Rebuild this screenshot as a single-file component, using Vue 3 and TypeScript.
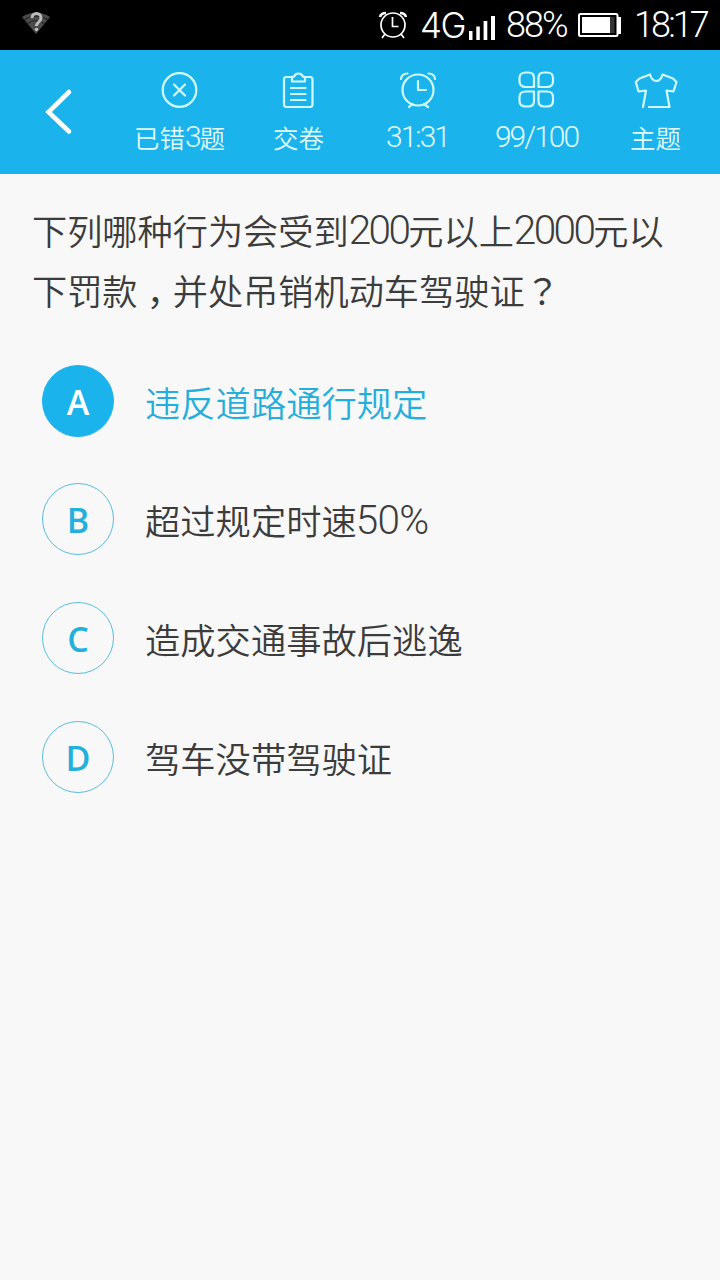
<script setup lang="ts">
interface Run { text: string; kind: string }
interface Option { key: string; text: string; selected?: boolean }
interface Tool { icon: string; label: string }

const tools: Tool[] = [
  { icon: 'wrong', label: '已错3题' },
  { icon: 'submit', label: '交卷' },
  { icon: 'timer', label: '31:31' },
  { icon: 'grid', label: '99/100' },
  { icon: 'theme', label: '主题' },
]

const question: string[] = ['下列哪种行为会受到200元以上2000元以', '下罚款，并处吊销机动车驾驶证？']

const options: Option[] = [
  { key: 'A', text: '违反道路通行规定', selected: true },
  { key: 'B', text: '超过规定时速50%' },
  { key: 'C', text: '造成交通事故后逃逸' },
  { key: 'D', text: '驾车没带驾驶证' },
]

// Splits a string so digits and punctuation can be set apart from the Chinese text.
function runs(text: string): Run[] {
  return (text.match(/[0-9%:/]+|，|？|[^0-9%:/，？]+/g) ?? []).map((t) => ({
    text: t,
    kind: /^[0-9%:/]/.test(t) ? 'latin' : t === '，' ? 'comma' : t === '？' ? 'mark' : 'han',
  }))
}
</script>

<template>
  <div class="screen">
    <div class="status">
      <svg class="wifi" width="30" height="26" viewBox="0 0 30 26">
        <path d="M1 6Q15 -3 29 6L15 23Z" fill="#4b4b4b" />
        <path d="M3 9Q15 1 27 9M6 13Q15 6 24 13" fill="none" stroke="#222" stroke-width="1.2" />
        <path d="M11 7C11 1 20 1 20 7C20 11 15.500 11 15.500 15" fill="none" stroke="#bcbcbc" stroke-width="3" />
        <circle cx="15.500" cy="18.500" r="1.800" fill="#bcbcbc" />
      </svg>
      <svg class="alarm" width="30" height="30" viewBox="0 0 30 30" fill="none" stroke="#fff" stroke-width="1.700">
        <circle cx="15" cy="15" r="12" />
        <path d="M14.500 7V16.500H20.500M7 24L4 28M23 24L26 28" />
        <path d="M2 7Q3 3 8 3M22 3Q27 3 28 7" stroke-width="2.600" />
      </svg>
      <span class="net">4G</span>
      <svg class="signal" width="28" height="26" viewBox="0 0 28 26" fill="#fff">
        <rect x="0" y="16" width="3.500" height="9" />
        <rect x="7.300" y="11.500" width="3.500" height="13.500" />
        <rect x="14.600" y="6" width="3.700" height="19" />
        <rect x="22" y="1" width="4" height="24" />
      </svg>
      <span class="percent">88%</span>
      <svg class="battery" width="44" height="26" viewBox="0 0 44 26">
        <rect x="1" y="2" width="38.500" height="22" rx="1.500" fill="none" stroke="#fff" stroke-width="2" />
        <rect x="4" y="5" width="28" height="16" fill="#fff" />
        <rect x="32" y="5" width="4.500" height="16" fill="#333" />
        <rect x="39.500" y="5" width="3.500" height="17" fill="#fff" />
      </svg>
      <span class="clock">18:17</span>
    </div>

    <div class="toolbar">
      <div class="back">
        <svg width="30" height="48" viewBox="0 0 30 48" fill="none" stroke="#fff" stroke-width="4.600" stroke-linecap="round" stroke-linejoin="miter">
          <path d="M26 4L5.500 24L26 43.500" />
        </svg>
      </div>
      <div v-for="t in tools" :key="t.icon" class="tool">
        <svg width="44" height="40" viewBox="0 0 44 40" fill="none" stroke="#d2fbff" stroke-width="2.200" stroke-linecap="round" stroke-linejoin="round">
          <template v-if="t.icon === 'wrong'">
            <circle cx="21.500" cy="20" r="16.800" />
            <path d="M16 14.500L27 25.500M27 14.500L16 25.500" />
          </template>
          <template v-else-if="t.icon === 'submit'">
            <path d="M15 7H9.500Q7 7 7 9.500V34.500Q7 37 9.500 37H33Q35.500 37 35.500 34.500V9.500Q35.500 7 33 7H27.500" />
            <path d="M15 11.500V7.500L17.500 6Q18.500 3.500 21.500 3.500Q24.500 3.500 25.500 6L28 7.500V11.500Z" />
            <path d="M14 18H28.500M14 24H28.500M14 30H28.500" />
          </template>
          <template v-else-if="t.icon === 'timer'">
            <circle cx="22" cy="20" r="15.500" />
            <path d="M22 11V20H30M16.500 34L13 37M28 34L32 37M5 9Q5.500 3.500 11.500 3.500M32.500 3.500Q38.500 3.500 39 9" />
          </template>
          <template v-else-if="t.icon === 'grid'">
            <path d="M19 17V8Q19 2.500 13.500 2.500H11Q4.500 2.500 4.500 8V11.500Q4.500 17 11 17Z" />
            <path d="M23.500 17V8Q23.500 2.500 29 2.500H32Q38 2.500 38 8V11.500Q38 17 32 17Z" />
            <path d="M19 21.500V31Q19 36.500 13.500 36.500H11Q4.500 36.500 4.500 31V27Q4.500 21.500 11 21.500Z" />
            <path d="M23.500 21.500V31Q23.500 36.500 29 36.500H32Q38 36.500 38 31V27Q38 21.500 32 21.500Z" />
          </template>
          <template v-else>
            <path d="M9 37L12 20.500L4.500 21.500L1.800 12L5.500 8.500L16 4.500Q18 11 22 11Q27 11 28.500 4.500L39 8.500L42.500 12L39.500 21.500L32.500 20.500L35.500 37H15" />
          </template>
        </svg>
        <div class="label">
          <span v-for="(r, i) in runs(t.label)" :key="i" :class="r.kind">{{ r.text }}</span>
        </div>
      </div>
    </div>

    <div class="question">
      <div v-for="line in question" :key="line" class="line">
        <span v-for="(r, i) in runs(line)" :key="i" :class="r.kind">{{ r.text }}</span>
      </div>
    </div>

    <div class="options">
      <div v-for="o in options" :key="o.key" class="option" :class="{ selected: o.selected }">
        <div class="badge"><span>{{ o.key }}</span></div>
        <div class="text">
          <span v-for="(r, i) in runs(o.text)" :key="i" :class="r.kind">{{ r.text }}</span>
        </div>
      </div>
    </div>
  </div>
</template>

<style>
body { background: #f8f8f8; }
</style>

<style scoped>
.screen {
  width: 720px;
  height: 1280px;
  overflow: hidden;
  background: #f8f8f8;
  color: #3c3c3c;
  font-family: "Noto Sans CJK SC", sans-serif;
  font-weight: 350;
  white-space: nowrap;
}
.screen span { display: inline-block; }
.status {
  display: flex;
  align-items: center;
  height: 50px;
  background: #000;
  color: #fff;
  font: 350 36px/52px Roboto, sans-serif;
}
.wifi { margin: 0 0 2px 21px; }
.alarm { margin-left: 327px; }
.net { width: 49px; margin-left: 12px; font-family: Inter, sans-serif; font-size: 35px; font-weight: 300; letter-spacing: -1.5px; }
.signal { margin-top: 5px; }
.percent { width: 63px; margin-left: 9px; letter-spacing: -2px; }
.battery { margin-left: 9px; }
.clock { margin-left: 12px; letter-spacing: -2.900px; }
.toolbar {
  display: flex;
  height: 124px;
  background: #1ab3ec;
}
.back { width: 120px; padding: 38px 0 0 43px; box-sizing: border-box; }
.tool {
  display: flex;
  flex-direction: column;
  align-items: center;
  width: 119px;
  padding-top: 20px;
}
.tool svg { display: block; }
.label {
  height: 36px;
  margin-top: 9px;
  color: #e0fcff;
  font-size: 25.500px;
  line-height: 36px;
}
.label .latin { position: relative; top: -1px; font-size: 30px; letter-spacing: -2px; line-height: 34px; }
.latin { font-family: Roboto, sans-serif; font-weight: 350; }
.question { padding: 26px 0 0 32px; }
.line { height: 59.500px; font-size: 35.200px; line-height: 59.500px; }
.line .latin, .text .latin { position: relative; top: -1px; font-size: 40.500px; letter-spacing: -2.600px; line-height: 50px; }
.text .latin { margin-left: -1px; letter-spacing: -0.800px; }
.comma, .mark { font-family: "Noto Sans CJK TC", sans-serif; font-weight: 400; }
.comma { position: relative; top: 11px; }
.options { display: flex; flex-direction: column; gap: 46.700px; padding: 45.500px 0 0 42px; }
.option { display: flex; align-items: center; height: 72px; }
.badge {
  width: 72px;
  height: 72px;
  box-sizing: border-box;
  border: 1.500px solid #58bddd;
  border-radius: 50%;
  color: #23b1dc;
  font: 600 34px/73px "Open Sans", "Noto Sans", sans-serif;
  text-align: center;
}
.text { height: 72px; margin-left: 31px; font-size: 35.300px; line-height: 74px; }
.selected .badge { border-color: #1ab3ec; background: #1ab3ec; color: #fff; }
.selected .text { color: #25aedb; }
</style>
